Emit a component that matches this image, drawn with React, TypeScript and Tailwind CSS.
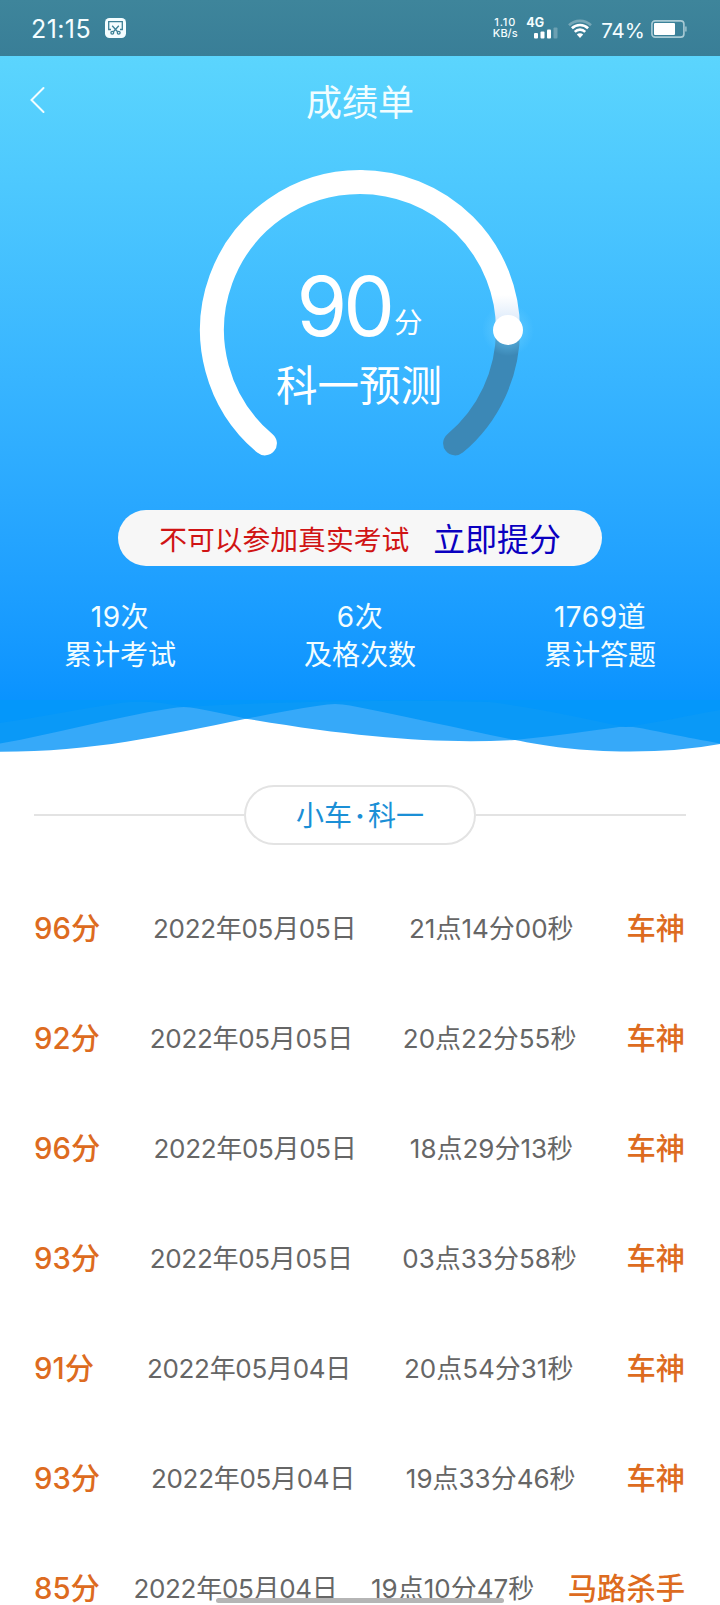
type ExamRecord = {
	score: number;
	date: string;
	time: string;
	title: string;
};

const records: ExamRecord[] = [
	{ score: 96, date: "2022年05月05日", time: "21点14分00秒", title: "车神" },
	{ score: 92, date: "2022年05月05日", time: "20点22分55秒", title: "车神" },
	{ score: 96, date: "2022年05月05日", time: "18点29分13秒", title: "车神" },
	{ score: 93, date: "2022年05月05日", time: "03点33分58秒", title: "车神" },
	{ score: 91, date: "2022年05月04日", time: "20点54分31秒", title: "车神" },
	{ score: 93, date: "2022年05月04日", time: "19点33分46秒", title: "车神" },
	{ score: 85, date: "2022年05月04日", time: "19点10分47秒", title: "马路杀手" },
];

const stats = [
	{ value: "19次", label: "累计考试" },
	{ value: "6次", label: "及格次数" },
	{ value: "1769道", label: "累计答题" },
];

const ScreenshotIcon = () => (
	<svg width="21" height="20" viewBox="0 0 21 20" fill="none">
		<rect width="21" height="20" rx="4.5" fill="#f4fdff" />
		<g stroke="#3c8096" strokeWidth="1.3">
			<path d="M6 11.5H3.7V3.7h13.6v7.8H15" />
			<path d="M7.2 7.8l5.4 6M13.8 7.8l-5.4 6" />
			<circle cx="7.3" cy="14.8" r="1.4" />
			<circle cx="13.7" cy="14.8" r="1.4" />
		</g>
	</svg>
);

const SignalIcon = () => (
	<svg width="24" height="12" viewBox="0 0 24 12" fill="#fff">
		<rect x="0" y="6" width="4" height="5.5" rx="1" />
		<rect x="6.5" y="4.5" width="4" height="7" rx="1" />
		<rect x="13" y="2.5" width="4" height="9" rx="1" />
		<rect x="19.5" y="0.5" width="4" height="11" rx="1" opacity="0.25" />
	</svg>
);

const WifiIcon = () => (
	<svg width="24" height="20" viewBox="0 0 24 20" fill="none" stroke="#fff" strokeWidth="2.6">
		<path d="M1 6.3a15.8 15.8 0 0 1 22 0" opacity="0.3" />
		<path d="M3.9 9.3a11.6 11.6 0 0 1 16.2 0" />
		<path d="M6.8 12.8a7.4 7.4 0 0 1 10.4 0" />
		<path d="M8.8 15.6a4.6 4.6 0 0 1 6.4 0L12 19z" fill="#fff" stroke="none" />
	</svg>
);

const BatteryIcon = () => (
	<svg width="36" height="18" viewBox="0 0 36 18" fill="none">
		<rect x="0.9" y="0.9" width="32" height="16.2" rx="3.2" stroke="#a9cbd5" strokeWidth="1.6" />
		<rect x="3" y="3" width="21" height="12" rx="1" fill="#fff" />
		<path d="M34.9 6.5v5" stroke="#a9cbd5" strokeWidth="1.3" />
	</svg>
);

const StatusBar = () => (
	<div className="flex h-14 items-center bg-linear-to-b from-[#3e859b] to-[#397e97] pl-[31px] pr-[33px] text-[#f4fdff]">
		<span className="mt-[1px] w-[74px] text-[25px] leading-6 tracking-[0.4px]">21:15</span>
		<ScreenshotIcon />
		<div className="ml-auto flex items-center">
			<div className="flex w-[24px] flex-col items-center text-[11px] font-medium leading-[11px]">
				<span className="tracking-[0.8px]">1.10</span>
				<span>KB/s</span>
			</div>
			<div className="ml-[9px] flex w-[33px] flex-col">
				<span className="text-[12.5px] font-bold leading-[10px]">4G</span>
				<div className="-mt-[1px] ml-[8px]">
					<SignalIcon />
				</div>
			</div>
			<div className="ml-[9px] mt-[1px]">
				<WifiIcon />
			</div>
			<span className="ml-[9px] mt-[5px] text-[20.5px] leading-6">74%</span>
			<div className="ml-[6px] mt-[2px]">
				<BatteryIcon />
			</div>
		</div>
	</div>
);

const Gauge = () => (
	<div className="relative mx-auto h-[320px] w-[360px]">
		<svg width="360" height="320" viewBox="0 0 360 320" fill="none" className="absolute inset-0">
			<defs>
				<linearGradient id="fade" gradientUnits="userSpaceOnUse" x1="0" y1="145" x2="0" y2="180">
					<stop offset="0" stopColor="#fff" />
					<stop offset="0.8" stopColor="#dbe9fa" />
				</linearGradient>
				<radialGradient id="glow">
					<stop offset="0.5" stopColor="#6fd0ff" stopOpacity="0.4" />
					<stop offset="1" stopColor="#6fd0ff" stopOpacity="0" />
				</radialGradient>
			</defs>
			<path
				d="M328 180A148 148 0 0 1 275.1 293.4"
				stroke="#3c88b6"
				strokeWidth="24"
				strokeLinecap="round"
			/>
			<circle cx="328" cy="180" r="26" fill="url(#glow)" />
			<path
				d="M84.9 293.4A148 148 0 0 1 180 32"
				stroke="#fff"
				strokeWidth="24"
				strokeLinecap="round"
			/>
			<path d="M180 32A148 148 0 0 1 328 180" stroke="url(#fade)" strokeWidth="24" />
			<circle cx="328" cy="180" r="15" fill="#fff" />
		</svg>
		<div className="relative flex flex-col items-center pt-[107px] text-white">
			<div className="mr-[1px] flex h-[100px] items-baseline">
				<span className="text-[82px] leading-[100px] tracking-[-4px]">90</span>
				<span className="relative -top-[3px] ml-[3px] text-[28.5px] leading-[28px]">分</span>
			</div>
			<span className="-mt-[1px] mr-[2px] text-[41.5px] leading-[60px]">科一预测</span>
		</div>
	</div>
);

const Waves = () => (
	<svg width="720" height="56" viewBox="0 0 720 56" className="block">
		<path
			d="M0 0H720V44Q680 51.5 630 51.5C580 51.5 545 46 515 40C440 44 360 38 246 18.7C160 36 95 51.7 0 51.7Z"
			fill="#36a9f9"
		/>
		<path
			d="M0 0H720V43.5C685 37 655 31 640 28Q626 25.5 612 28C575 33 545 37 515 40C460 29 410 17 350 5.5Q335 2.5 320 5.5C295 9 270 14 246 18.7C230 15 215 12 197 8.5Q184 5.5 170 8.5C110 18 55 34 0 43.5Z"
			fill="#0a99f7"
		/>
		<path
			d="M0 0H720V10C690 15 655 23 626 27C580 18 540 8 490 2Q340 -2 184 7Q150 -1 120 3C80 9 40 17 0 23Z"
			fill="#0497fa"
		/>
	</svg>
);

const RecordRow = ({ score, date, time, title }: ExamRecord) => (
	<li className="flex h-[110px] items-center justify-between whitespace-nowrap text-[26px] leading-[28px] text-[#666]">
		<span className="text-[29.3px] font-medium text-[#dd6b20]">{score}分</span>
		<span className="tracking-[-0.3px]">{date}</span>
		<span>{time}</span>
		<span className="text-[29.3px] font-medium text-[#dd6b20]">{title}</span>
	</li>
);

export default function App() {
	return (
		<div className="relative h-[1605px] w-[720px] overflow-hidden bg-white font-['Inter','Noto_Sans_CJK_SC',sans-serif]">
			<StatusBar />
			<div className="h-[644px] bg-linear-to-b from-[#5bd5fd] to-[#0a93ff] text-[#f2fdff]">
				<header className="grid h-[94px] grid-cols-[1fr_auto_1fr] items-center pl-[29px] pr-[29px]">
					<svg width="16" height="28" viewBox="0 0 16 28" fill="none" stroke="currentColor" strokeWidth="2" className="-mt-[6px]">
						<path d="M14.5 2L2.5 14L14.5 26" strokeLinecap="round" />
					</svg>
					<h1 className="-mt-[1px] text-[36px] leading-[54px]">成绩单</h1>
				</header>
				<Gauge />
				<div className="mx-auto mt-[40px] flex h-14 w-[484px] items-center justify-center gap-[24px] rounded-full bg-[#f7f7f7] pt-[3px]">
					<span className="text-[27.8px] leading-10 text-[#d01414]">不可以参加真实考试</span>
					<button className="text-[31.9px] leading-10 text-[#0a00c0]">立即提分</button>
				</div>
				<div className="mt-[32px] grid grid-cols-3 text-center text-[28px] leading-[38px]">
					{stats.map((item) => (
						<div key={item.label} className="flex flex-col">
							<span className="h-[38px] tracking-[0.5px]">{item.value}</span>
							<span className="h-[38px]">{item.label}</span>
						</div>
					))}
				</div>
			</div>
			<Waves />
			<div className="mt-[29px] flex items-center px-[34px]">
				<div className="h-[2px] flex-1 bg-[#e3e3e3]" />
				<div className="flex h-[60px] w-[232px] items-center justify-center rounded-full border-2 border-[#e3e3e3] pt-[1px] text-[28px] leading-10 text-[#1b8fd6]">
					小车<span className="w-4 text-center font-bold">·</span>科一
				</div>
				<div className="h-[2px] flex-1 bg-[#e3e3e3]" />
			</div>
			<ul className="mt-[29px] pl-[34px] pr-[35px]">
				{records.map((record) => (
					<RecordRow key={record.time} {...record} />
				))}
			</ul>
			<div className="absolute left-[216px] top-[1598px] h-[5px] w-[288px] rounded-full bg-[#b5b5b5]" />
		</div>
	);
}
